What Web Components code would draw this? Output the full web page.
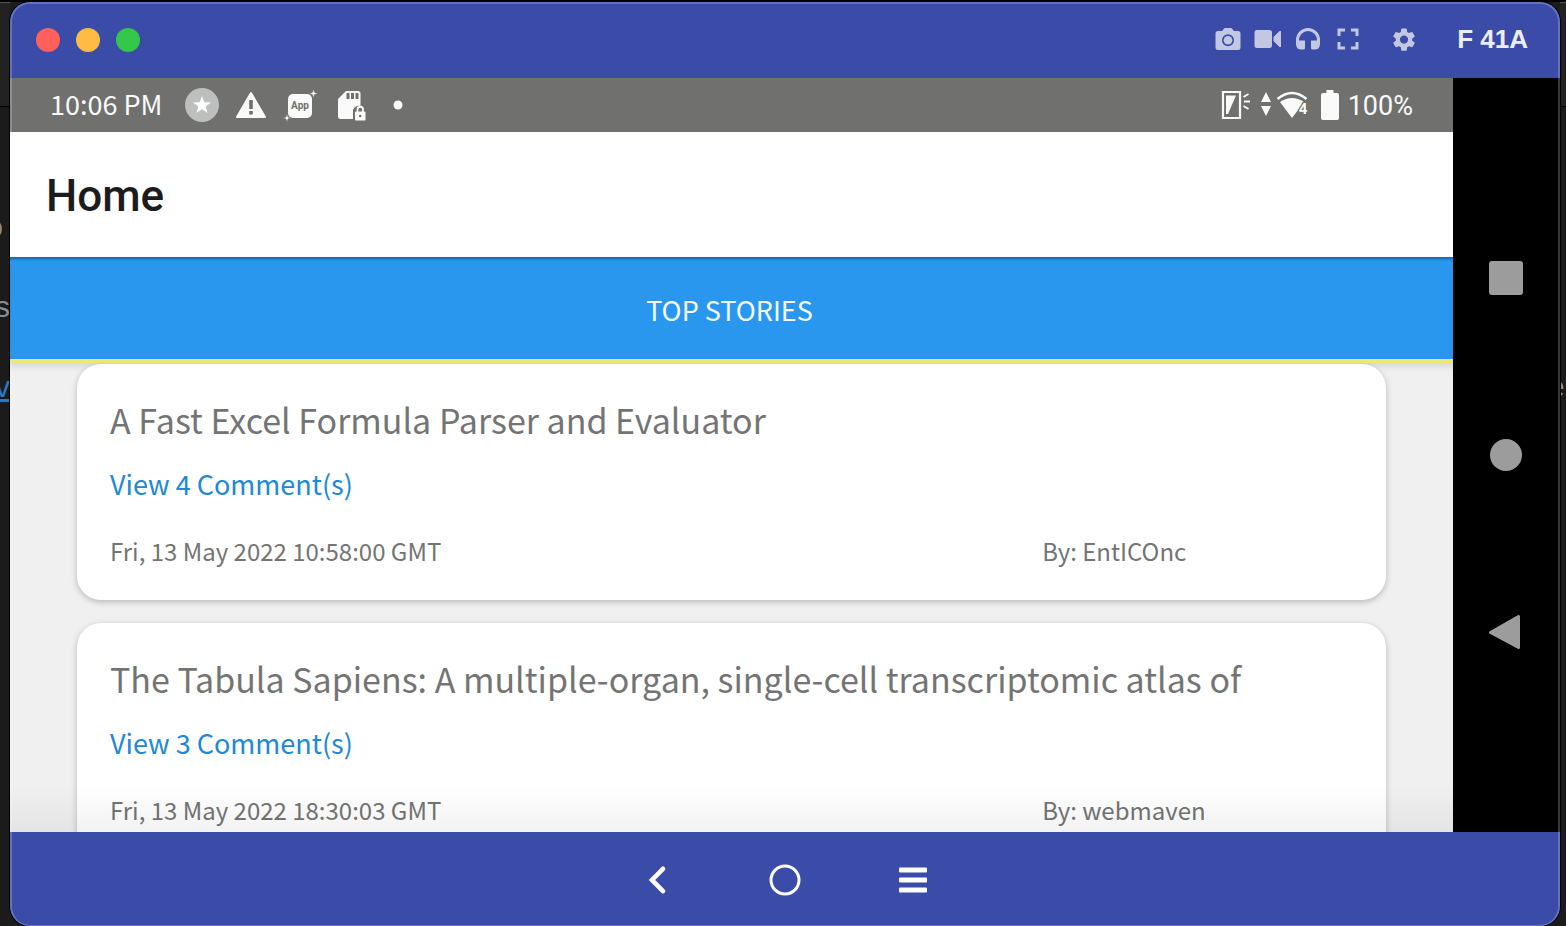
<!DOCTYPE html>
<html lang="en">
<head>
<meta charset="utf-8">
<title>F 41A</title>
<style>
html, body { height: 100%; margin: 0; }
body { background: #1b1b1b; overflow: hidden; font-family: "Noto Sans CJK SC", "Noto Sans", sans-serif; }
</style>
</head>
<body>
<mirror-desktop>
  <side-strip slot="left" side="left">
    <span slot="first">o</span>
    <span slot="second">s</span>
    <a slot="third" href="#preview">v</a>
  </side-strip>
  <device-window>
    <title-bar slot="title" name="F 41A"></title-bar>
    <phone-screen slot="screen">
      <status-bar slot="status"></status-bar>
      <app-bar slot="appbar">Home</app-bar>
      <tab-strip slot="tabs">TOP STORIES</tab-strip>
      <story-card comments="4" date="Fri, 13 May 2022 10:58:00 GMT" author="EntICOnc">A Fast Excel Formula Parser and Evaluator</story-card>
      <story-card comments="3" date="Fri, 13 May 2022 18:30:03 GMT" author="webmaven">The Tabula Sapiens: A multiple-organ, single-cell transcriptomic atlas of</story-card>
    </phone-screen>
    <phone-nav slot="nav"></phone-nav>
    <control-bar slot="controls"></control-bar>
  </device-window>
  <side-strip slot="right" side="right">
    <span slot="third">e</span>
  </side-strip>
</mirror-desktop>

<script>
const ICONS = {
  camera: [28, 28, '<path fill-rule="evenodd" d="M4 6H8L10 3.500Q10.500 3 11 3H17Q17.500 3 18 3.500L20 6H24Q26.500 6 26.500 8.500V22.500Q26.500 25 24 25H4Q1.500 25 1.500 22.500V8.500Q1.500 6 4 6ZM14 9.200A6 6 0 1 0 14 21.200A6 6 0 1 0 14 9.200Z"/><circle cx="14" cy="15.200" r="4.300"/>'],
  video: [28, 28, '<path d="M3 5H15.500Q18 5 18 7.500V20.500Q18 23 15.500 23H3Q.500 23 .500 20.500V7.500Q.500 5 3 5ZM19.500 12L25.500 6H27V22H25.500L19.500 16Z"/>'],
  headphones: [28, 28, '<path d="M14 3A12 12 0 0 0 2 15V19Q2 24.500 7.500 24.500H9.500Q11 24.500 11 23V15.500H5V15A9 9 0 0 1 23 15V15.500H17V23Q17 24.500 18.500 24.500H20.500Q26 24.500 26 19V15A12 12 0 0 0 14 3Z"/>'],
  fullscreen: [28, 28, '<path fill="none" stroke="currentColor" stroke-width="3" d="M11 5H5V11M17 5H23V11M11 23H5V17M17 23H23V17"/>'],
  gear: [28, 28, '<path transform="translate(.2 .8) scale(1.150)" d="M19.140 12.940c.040-.300.060-.610.060-.940 0-.320-.020-.640-.070-.940l2.030-1.580c.180-.140.230-.410.120-.610l-1.920-3.320c-.120-.220-.370-.290-.590-.220l-2.390.960c-.500-.380-1.030-.700-1.620-.940l-.360-2.540c-.040-.240-.240-.410-.480-.410h-3.840c-.240 0-.430.170-.470.410l-.360 2.540c-.590.240-1.130.570-1.620.940l-2.390-.960c-.220-.080-.470 0-.590.220L2.740 8.870c-.120.210-.080.470.120.610l2.030 1.580c-.050.300-.090.630-.090.940s.020.640.070.940l-2.030 1.580c-.180.140-.230.410-.120.610l1.920 3.320c.120.220.370.290.590.220l2.390-.960c.500.380 1.030.700 1.620.940l.360 2.540c.050.240.240.410.480.410h3.840c.240 0 .440-.170.470-.410l.360-2.540c.590-.240 1.130-.560 1.620-.940l2.390.960c.220.080.470 0 .590-.220l1.920-3.320c.120-.220.070-.470-.120-.610l-2.010-1.580zM12 15.600c-1.980 0-3.600-1.620-3.600-3.600s1.620-3.600 3.600-3.600 3.600 1.620 3.600 3.600-1.620 3.600-3.600 3.600z"/>'],
  star: [34, 34, '<circle cx="17" cy="17" r="17" fill="#bcbfbd"/><path fill="#fff" d="M17 8L19.300 14.200L26 14.400L20.700 18.500L22.600 25L17 21.200L11.400 25L13.300 18.500L8 14.400L14.700 14.200Z"/>'],
  warning: [34, 34, '<path stroke="currentColor" stroke-width="2" stroke-linejoin="round" d="M17 5L31 29H3Z"/><path fill="#70706e" d="M15.200 12H18.800V21H15.200ZM15.200 23H18.800V26.400H15.200Z"/>'],
  app: [34, 34, '<rect x="5" y="6" width="24" height="24" rx="5"/><path d="M30.500 1L31.600 4.400L35 5.500L31.600 6.600L30.500 10L29.400 6.600L26 5.500L29.400 4.400ZM4 26L5 29L8 30L5 31L4 34L3 31L0 30L3 29Z" stroke="#70706e" stroke-width=".600"/><text x="17" y="21" text-anchor="middle" font-family="Roboto, sans-serif" font-weight="700" font-size="10" fill="#70706e">App</text>'],
  sdcard: [34, 34, '<path d="M14 3H26Q28.500 3 28.500 5.500V18A7 7 0 0 0 21 22V31H8.500Q6 31 6 28.500V11Z"/><path fill="#70706e" d="M14.500 5H17.500V11H14.500ZM19 5H22V11H19ZM23.500 5H26.500V11H23.500Z"/><rect x="23" y="23.500" width="10.500" height="9" rx="1"/><path fill="none" stroke="currentColor" stroke-width="1.800" d="M25.500 24V21.500A2.700 2.700 0 0 1 31 21.500V24"/><circle cx="28.200" cy="28" r="1.300" fill="#70706e"/>'],
  dot: [34, 34, '<circle cx="17" cy="17" r="4.500"/>'],
  flash: [30, 30, '<path fill="none" stroke="currentColor" stroke-width="2.200" d="M2 2H19V28H2Z"/><path d="M5 5.500H15L7 24H5Z"/><path stroke="currentColor" stroke-width="2" d="M22.500 7L27.500 4M23 11.500H29M22.500 16L27.500 19"/>'],
  updown: [12, 30, '<path d="M6 2L11 12H1ZM6 26L1 16H11Z"/>'],
  wifi: [32, 30, '<path fill="none" stroke="currentColor" stroke-width="2.400" d="M1.500 9Q16 -3 30.500 9"/><path d="M4 12Q16 4 28 12L16 28Z"/><text x="27" y="24" text-anchor="middle" font-family="Roboto, sans-serif" font-weight="700" font-size="15" stroke="#70706e" stroke-width="2.500" paint-order="stroke">4</text>'],
  battery: [18, 30, '<path d="M5.500 0H12.500V3H16Q18 3 18 5V28Q18 30 16 30H2Q0 30 0 28V5Q0 3 2 3H5.500Z"/>'],
  square: [36, 36, '<rect x="1" y="1" width="34" height="34" rx="3"/>'],
  circle: [36, 36, '<circle cx="18" cy="18" r="16"/>'],
  triangle: [36, 36, '<path stroke="currentColor" stroke-width="3" stroke-linejoin="round" d="M30.500 2.500V33.500L2.500 18.500Z"/>'],
  back: [32, 32, '<path fill="none" stroke="currentColor" stroke-width="4.600" stroke-linecap="round" d="M22 4.800L11 16L22 27.200"/>'],
  home: [32, 32, '<circle cx="16" cy="16" r="14" fill="none" stroke="currentColor" stroke-width="3"/>'],
  menu: [32, 32, '<rect x="2" y="3.500" width="28" height="5" rx="1"/><rect x="2" y="13.500" width="28" height="5" rx="1"/><rect x="2" y="23.500" width="28" height="5" rx="1"/>']
};

const BUTTON = 'button { all: unset; display: grid; place-items: center; cursor: pointer; }';

function define(name, render) {
  customElements.define(name, class extends HTMLElement {
    connectedCallback() {
      if (this.shadowRoot) return;
      const template = document.createElement('template');
      template.innerHTML = render(this);
      this.attachShadow({ mode: 'open' }).append(template.content.cloneNode(true));
    }
  });
}

define('ui-icon', el => {
  const [w, h, body] = ICONS[el.getAttribute('name')];
  return `<style>:host { display: block; flex: none; } svg { display: block; overflow: visible; fill: currentColor; }</style>
    <svg width="${w}" height="${h}" viewBox="0 0 ${w} ${h}" aria-hidden="true">${body}</svg>`;
});

define('mirror-desktop', () => `
  <style>
    :host { display: grid; grid-template-columns: 10px minmax(0, 1fr) 6px; height: 100vh; box-sizing: border-box; border-top: 2px solid #000; }
  </style>
  <slot name="left"></slot><slot></slot><slot name="right"></slot>`);

define('side-strip', el => `
  <style>
    :host { display: grid; grid-template: 104px 80px 80px 80px 80px / minmax(0, 1fr); align-content: start; overflow: hidden; min-width: 0; box-sizing: border-box;
      border-top: 1px solid #555; background: #1b1b1b; color: #8c8c8c; font: 30px/80px "Liberation Sans", sans-serif; }
    .rule { border-bottom: 1px solid #000; background: #222; }
    .cell { display: flex; min-width: 0; justify-content: flex-end; }
    .one { grid-row: 3; padding-right: 7px; }
    .two { grid-row: 4; }
    .three { grid-row: 5; }
    .right { justify-content: flex-start; margin-left: -12px; }
    ::slotted(a) { color: #2e77c4; text-decoration: underline; }
  </style>
  <div class="rule"></div>
  <div class="cell one"><slot name="first"></slot></div>
  <div class="cell two"><slot name="second"></slot></div>
  <div class="cell three ${el.getAttribute('side')}"><slot name="third"></slot></div>`);

define('device-window', () => `
  <style>
    :host { display: grid; grid-template: auto minmax(0, 1fr) auto / minmax(0, 1fr) 107px; position: relative; overflow: hidden;
      border-radius: 20px; background: #3a4ba8; min-width: 0; box-shadow: 0 0 0 1px #000; }
    :host::after { content: ""; position: absolute; inset: 0; border-radius: 20px; border: 2px solid rgba(255,255,255,.22); border-bottom-width: 1px; pointer-events: none; }
    .wide { grid-column: 1 / -1; }
    .cell { min-height: 0; display: grid; }
  </style>
  <div class="wide"><slot name="title"></slot></div>
  <div class="cell"><slot name="screen"></slot></div>
  <div class="cell"><slot name="nav"></slot></div>
  <div class="wide"><slot name="controls"></slot></div>`);

define('title-bar', el => `
  <style>
    :host { display: flex; align-items: center; height: 76px; padding: 0 32px 0 26px; box-sizing: border-box; background: #3a4ba8; color: #c3c8e2; }
    ${BUTTON}
    .lights { display: flex; gap: 16px; margin-right: auto; }
    .light { width: 24px; height: 24px; border-radius: 50%; }
    .close { background: #ff605c; } .min { background: #ffbb44; } .max { background: #34c84a; }
    .tools { display: flex; padding-bottom: 2px; }
    .tools button { width: 40px; height: 40px; }
    .tools .settings { margin-left: 16px; }
    h1 { margin: 0 0 0 33px; padding-bottom: 2px; font: bold 26px/32px "Liberation Sans", sans-serif; color: #eceef7; }
  </style>
  <div class="lights"><button class="light close" aria-label="Close"></button><button class="light min" aria-label="Minimize"></button><button class="light max" aria-label="Zoom"></button></div>
  <div class="tools">
    <button aria-label="Screenshot"><ui-icon name="camera"></ui-icon></button>
    <button aria-label="Record"><ui-icon name="video"></ui-icon></button>
    <button aria-label="Audio"><ui-icon name="headphones"></ui-icon></button>
    <button aria-label="Fullscreen"><ui-icon name="fullscreen"></ui-icon></button>
    <button class="settings" aria-label="Settings"><ui-icon name="gear"></ui-icon></button>
  </div>
  <h1>${el.getAttribute('name')}</h1>`);

define('phone-screen', () => `
  <style>
    :host { display: flex; flex-direction: column; min-height: 0; overflow: hidden; position: relative; background: #eff0ef; }
    :host::after { content: ""; position: absolute; inset: auto 0 0; height: 48px; background: linear-gradient(transparent, rgba(0,0,0,.05)); pointer-events: none; }
    .feed { display: flex; flex-direction: column; gap: 23px; padding: 1px 67px 0; box-shadow: inset 0 8px 8px -6px rgba(0,0,0,.14); }
  </style>
  <slot name="status"></slot><slot name="appbar"></slot><slot name="tabs"></slot>
  <main class="feed"><slot></slot></main>`);

define('status-bar', () => `
  <style>
    :host { display: flex; flex: none; align-items: center; justify-content: space-between; height: 54px; box-sizing: border-box; padding: 0 40px; background: #70706e; color: #fafafa; }
    div { display: flex; align-items: center; }
    time { font-size: 27px; line-height: 32px; width: 112px; margin-right: 23px; padding-bottom: 2px; white-space: nowrap; }
    .notes { gap: 15px; }
    .system { gap: 9px; }
    .signal { gap: 4px; margin-right: 4px; }
    .level { font: 27px/32px Roboto, sans-serif; padding-top: 2px; }
  </style>
  <div><time>10:06 PM</time>
    <div class="notes"><ui-icon name="star"></ui-icon><ui-icon name="warning"></ui-icon><ui-icon name="app"></ui-icon><ui-icon name="sdcard"></ui-icon><ui-icon name="dot"></ui-icon></div></div>
  <div class="system"><ui-icon name="flash"></ui-icon><div class="signal"><ui-icon name="updown"></ui-icon><ui-icon name="wifi"></ui-icon></div><ui-icon name="battery"></ui-icon><span class="level">100%</span></div>`);

define('app-bar', () => `
  <style>
    :host { display: flex; flex: none; align-items: center; height: 125px; padding: 0 36px; background: #fff; }
    h2 { margin: 0; padding-top: 2px; font: 500 44px/48px Roboto, sans-serif; color: #1c1c1e; }
  </style>
  <h2><slot></slot></h2>`);

define('tab-strip', () => `
  <style>
    :host { display: flex; flex: none; background: #2a97ef; box-shadow: inset 0 3px 3px -1px rgba(0,0,0,.35); border-bottom: 4px solid #efe57a; position: relative; z-index: 1; }
    ${BUTTON}
    button { flex: 1; height: 102px; padding: 4px 4px 0 0; box-sizing: border-box; font-size: 27px; line-height: 32px; color: #f4fbff; }
  </style>
  <button role="tab" aria-selected="true"><slot></slot></button>`);

define('story-card', el => `
  <style>
    :host { display: block; flex: none; padding: 32px 33px 33px; border-radius: 24px; background: #fff; color: #747474; box-shadow: 0 2px 6px rgba(0,0,0,.24); }
    article { display: flex; flex-direction: column; align-items: flex-start; }
    h3 { margin: 0 0 24px; font-size: 34px; line-height: 48px; font-weight: 400; white-space: nowrap; }
    a { font-size: 27px; line-height: 32px; color: #2088d6; text-decoration: none; margin-bottom: 35px; }
    footer { display: grid; grid-template-columns: 3fr 1fr; width: 100%; font-size: 24px; line-height: 32px; }
  </style>
  <article>
    <h3><slot></slot></h3>
    <a href="#comments">View ${el.getAttribute('comments')} Comment(s)</a>
    <footer><time>${el.getAttribute('date')}</time><span>By: ${el.getAttribute('author')}</span></footer>
  </article>`);

define('phone-nav', () => `
  <style>
    :host { display: flex; flex-direction: column; align-items: center; justify-content: center; gap: 141px; padding-right: 2px; background: #000; color: #9c9c9c; }
    ${BUTTON}
  </style>
  <button aria-label="Recent apps"><ui-icon name="square"></ui-icon></button>
  <button aria-label="Home"><ui-icon name="circle"></ui-icon></button>
  <button aria-label="Back"><ui-icon name="triangle"></ui-icon></button>`);

define('control-bar', () => `
  <style>
    :host { display: flex; justify-content: center; align-items: center; height: 94px; padding-top: 2px; box-sizing: border-box; background: #3a4ba8; color: #fff; }
    ${BUTTON}
    button { width: 128px; height: 64px; }
  </style>
  <button aria-label="Back"><ui-icon name="back"></ui-icon></button>
  <button aria-label="Home"><ui-icon name="home"></ui-icon></button>
  <button aria-label="Menu"><ui-icon name="menu"></ui-icon></button>`);
</script>
</body>
</html>
